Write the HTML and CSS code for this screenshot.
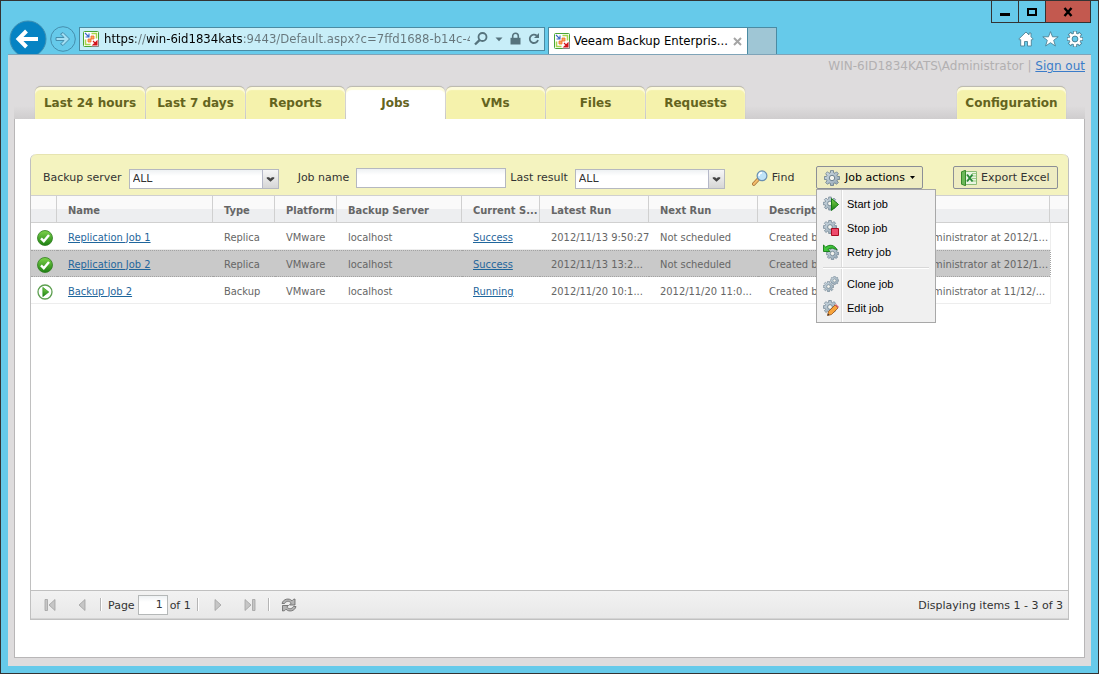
FILE: index.html
```html
<!DOCTYPE html>
<html lang="en">
<head>
    <meta charset="UTF-8">
    <meta name="viewport" content="width=device-width, initial-scale=1.0">
    <title>Veeam Backup Enterprise Manager</title>
    <link rel="stylesheet" href="styles.css">
</head>
<body>
    <!-- shared icon shapes -->
    <svg class="defs" width="0" height="0" aria-hidden="true">
        <defs>
            <linearGradient id="green" x1="0" y1="0" x2="0" y2="1">
                <stop offset="0" stop-color="#7ed34b"/>
                <stop offset="1" stop-color="#1c7f12"/>
            </linearGradient>
            <linearGradient id="steel" x1="0" y1="0" x2="1" y2="1">
                <stop offset="0" stop-color="#d3dee6"/>
                <stop offset="1" stop-color="#8fa3b1"/>
            </linearGradient>
            <symbol id="gear" viewBox="0 0 16 16">
                <path d="M6.500.6h3v2l1.500.7 1.500-1.500 1.900 1.900L13 5.200l.6 1.300h2v3h-2L13 10.900l1.400 1.500-1.900 1.900-1.500-1.400-1.500.6v2h-3v-2L5 12.900l-1.500 1.400-1.900-1.900L3 10.900l-.6-1.400h-2v-3h2L3 5.200 1.600 3.700l1.900-1.900L5 3.300l1.500-.7z" fill="url(#steel)" stroke="#647a8a" stroke-width=".8"/>
                <circle cx="8" cy="8" r="2.700" fill="#f4f4ee" stroke="#647a8a" stroke-width=".9"/>
            </symbol>
            <symbol id="site" viewBox="0 0 16 16">
                <rect x=".5" y=".5" width="15" height="15" rx="1" fill="#fff" stroke="#49a535"/>
                <path d="M8.500 2.500h5v5M2.500 8.500v5h5" fill="none" stroke="#a6d64a" stroke-width="1.500"/>
                <path d="M8.500 15.500h7v-7" fill="none" stroke="#888"/>
                <path d="M8 5h3v3H8zM5 8h3v3H5z" fill="#fba45c" stroke="#f0702a" stroke-width=".8"/>
                <path d="M2 2l3.500 3.500M6 2.500V6H2.500" fill="none" stroke="#3b68c8" stroke-width="1.100"/>
                <path d="M10 10l3 3M14 10v4h-4z" fill="#d2141c" stroke="#d2141c" stroke-width="1.100"/>
            </symbol>
            <symbol id="ok" viewBox="0 0 16 16">
                <circle cx="8" cy="8" r="7.500" fill="url(#green)" stroke="#2f7c20" stroke-width=".8"/>
                <path d="M4 8.300l2.800 2.900L12 4.900" fill="none" stroke="#fff" stroke-width="2.400"/>
            </symbol>
            <symbol id="run" viewBox="0 0 16 16">
                <circle cx="8" cy="8" r="7" fill="#fff" stroke="#5d9f50" stroke-width="1.300"/>
                <path d="M5.800 3.300v9.400L11.800 8z" fill="url(#green)" stroke="#1c8a12" stroke-width=".6"/>
            </symbol>
            <symbol id="chevron" viewBox="0 0 16 16">
                <path d="M4 6h2.500L8 7.500 9.500 6H12v1.500L8 11 4 7.500z" fill="#444"/>
            </symbol>
        </defs>
    </svg>

    <div class="window">
        <header class="browser-bar">
            <button class="back" aria-label="Back">
                <svg width="38" height="38" viewBox="0 0 38 38">
                    <circle cx="19" cy="19" r="18" fill="#0683c3" stroke="#3f8fb2"/>
                    <path d="M9.500 19H29M17.500 11l-8 8 8 8" fill="none" stroke="#fff" stroke-width="4"/>
                </svg>
            </button>
            <button class="forward" aria-label="Forward">
                <svg width="26" height="26" viewBox="0 0 26 26">
                    <circle cx="13" cy="13" r="12.300" fill="none" stroke="#458ead"/>
                    <path d="M6 11.500h8L10.500 8l2.500-1.500 6.500 6.500-6.500 6.500-2.500-1.500 3.500-3.500H6z" fill="#a3dff3" stroke="#458ead"/>
                </svg>
            </button>
            <form class="address">
                <svg width="16" height="16" aria-hidden="true"><use href="#site"/></svg>
                <input type="text" aria-label="Address" value="https://win-6id1834kats:9443/Default.aspx?c=7ffd1688-b14c-46f2-9d31">
                <button type="button" aria-label="Search">
                    <svg width="14" height="16" viewBox="0 0 14 16">
                        <circle cx="8.500" cy="6" r="4" fill="none" stroke="#56737d" stroke-width="1.800"/>
                        <path d="M5.500 9.200L1 13.500" stroke="#56737d" stroke-width="2.400"/>
                    </svg>
                </button>
                <button type="button" aria-label="Show address list">
                    <svg width="8" height="16" viewBox="0 0 8 16"><path d="M.5 6.500h7L4 10.300z" fill="#56737d"/></svg>
                </button>
                <button type="button" aria-label="Security report">
                    <svg width="11" height="16" viewBox="0 0 11 16">
                        <path d="M2.700 7V5a2.800 2.800 0 0 1 5.600 0v2" fill="none" stroke="#56737d" stroke-width="1.600"/>
                        <path d="M.5 6.800h10v6.700H.5z" fill="#56737d"/>
                    </svg>
                </button>
                <button type="button" aria-label="Refresh">
                    <svg width="12" height="16" viewBox="0 0 12 16">
                        <path d="M8.800 4.700A4.200 4.200 0 1 0 10 9" fill="none" stroke="#56737d" stroke-width="1.800"/>
                        <path d="M11 2v5H6z" fill="#56737d"/>
                    </svg>
                </button>
            </form>
            <div class="browser-tab">
                <svg width="16" height="16" aria-hidden="true"><use href="#site"/></svg>
                <span>Veeam Backup Enterpris...</span>
                <button aria-label="Close tab">
                    <svg width="9" height="9" viewBox="0 0 9 9"><path d="M1 1l7 7M8 1L1 8" stroke="#a5a5a5" stroke-width="2"/></svg>
                </button>
            </div>
            <button class="new-tab" aria-label="New tab"></button>
            <div class="window-tools">
                <div class="caption">
                    <button aria-label="Minimize"><svg width="10" height="10" viewBox="0 0 10 10"><path d="M0 6h10v3H0z"/></svg></button>
                    <button aria-label="Maximize"><svg width="10" height="10" viewBox="0 0 10 10"><path d="M1 2h8v6H1z" fill="none" stroke="#000" stroke-width="2"/></svg></button>
                    <button class="close" aria-label="Close"><svg width="10" height="10" viewBox="0 0 10 10"><path d="M1.500 1l7 8M8.500 1l-7 8" stroke="#000" stroke-width="2.400"/></svg></button>
                </div>
                <div class="shortcuts">
                    <button aria-label="Home">
                        <svg width="16" height="16" viewBox="0 0 16 16"><path d="M8 1L.8 8l1.200 1.200.7-.6V15h3.800v-4.500h3V15h3.800V8.600l.7.600L15.200 8 13 5.800V2h-2v1.900z" fill="#fff" stroke="#4b8296" stroke-width=".9"/></svg>
                    </button>
                    <button aria-label="Favorites">
                        <svg width="17" height="16" viewBox="0 0 17 16"><path d="M8.500.6l2 5.200h5.700l-4.500 3.500 1.700 5.700-4.900-3.300L3.600 15l1.700-5.700L.8 5.800h5.700z" fill="#fff" stroke="#4b8296" stroke-width=".9"/></svg>
                    </button>
                    <button aria-label="Tools">
                        <svg width="16" height="16" viewBox="0 0 16 16">
                            <g stroke="#4b8296" stroke-width="4.200"><path d="M8 0v16M0 8h16M2.300 2.300l11.400 11.400M13.700 2.300L2.300 13.700"/></g>
                            <circle cx="8" cy="8" r="5.800" fill="#fff" stroke="#4b8296" stroke-width=".8"/>
                            <g stroke="#fff" stroke-width="2.400"><path d="M8 .6v14.800M.6 8h14.800M2.800 2.800l10.400 10.400M13.200 2.800L2.800 13.200"/></g>
                            <circle cx="8" cy="8" r="2.900" fill="#66caea" stroke="#4b8296"/>
                        </svg>
                    </button>
                </div>
            </div>
        </header>

        <main class="page">
            <div class="user-bar">WIN-6ID1834KATS\Administrator | <a href="#">Sign out</a></div>

            <nav class="tabs">
                <a class="tab wide" href="#">Last 24 hours</a>
                <a class="tab" href="#">Last 7 days</a>
                <a class="tab" href="#">Reports</a>
                <a class="tab active" href="#">Jobs</a>
                <a class="tab" href="#">VMs</a>
                <a class="tab" href="#">Files</a>
                <a class="tab" href="#">Requests</a>
                <a class="tab config" href="#">Configuration</a>
            </nav>

            <section class="panel">
                <div class="grid">
                    <div class="toolbar">
                        <label for="server">Backup server</label>
                        <span class="combo">
                            <select id="server"><option>ALL</option></select>
                            <svg width="16" height="18" aria-hidden="true"><use href="#chevron"/></svg>
                        </span>
                        <label class="job-label" for="job-name">Job name</label>
                        <input type="text" id="job-name">
                        <label for="result">Last result</label>
                        <span class="combo">
                            <select id="result"><option>ALL</option></select>
                            <svg width="16" height="18" aria-hidden="true"><use href="#chevron"/></svg>
                        </span>
                        <button class="find">
                            <svg width="16" height="16" viewBox="0 0 16 16">
                                <path d="M6 9.500L1.800 14" stroke="#a9753a" stroke-width="3.600" stroke-linecap="round"/>
                                <path d="M6 9.500L1.800 14" stroke="#f3bd6c" stroke-width="2" stroke-linecap="round"/>
                                <circle cx="10" cy="5.800" r="4.900" fill="#bfe3f8" stroke="#6a8fb0" stroke-width="1.200"/>
                                <path d="M7 6a3.200 3.200 0 0 1 3-3.200" fill="none" stroke="#fff" stroke-width="1.400"/>
                            </svg>
                            Find
                        </button>
                        <div class="actions">
                            <button class="boxed job-actions">
                                <svg width="16" height="16"><use href="#gear"/></svg>
                                Job actions
                                <svg width="5" height="4" viewBox="0 0 5 4"><path d="M0 0h5L2.500 3z"/></svg>
                            </button>
                            <div class="menu">
                                <button>
                                    <svg width="16" height="16" viewBox="0 0 16 16"><use href="#gear" width="14" height="15"/><path d="M8.500 2.500v12L15.500 8.500z" fill="url(#green)" stroke="#147c14"/></svg>
                                    Start job
                                </button>
                                <button>
                                    <svg width="16" height="16" viewBox="0 0 16 16"><use href="#gear" width="14" height="14"/><path d="M8.500 8.500h7v7h-7z" fill="#ee4a6c" stroke="#a80c20"/></svg>
                                    Stop job
                                </button>
                                <button>
                                    <svg width="16" height="16" viewBox="0 0 16 16"><use href="#gear" x="3" y="3" width="13" height="13"/><path d="M.5 1v6.500h6.500L5 5.500C7.500 3.600 10.500 3.600 14 6 12 .8 6 0 2.800 3.200z" fill="#3fc43a" stroke="#147c14" stroke-width=".9"/></svg>
                                    Retry job
                                </button>
                                <hr>
                                <button>
                                    <svg width="16" height="16" viewBox="0 0 16 16"><use href="#gear" x="7" width="9" height="9"/><use href="#gear" y="5" width="11" height="11"/></svg>
                                    Clone job
                                </button>
                                <button>
                                    <svg width="16" height="16" viewBox="0 0 16 16"><use href="#gear" width="14" height="14"/><path d="M4.500 15.500l1-4L12 5l3 3-6.500 6.500z" fill="#f7a43c" stroke="#96501a" stroke-width=".8"/><path d="M12 5l1-1 3 3-1 1z" fill="#d9606a"/><path d="M4.500 15.500l.5-2 1.500 1.500z" fill="#333"/></svg>
                                    Edit job
                                </button>
                            </div>
                        </div>
                        <button class="boxed export">
                            <svg width="16" height="16" viewBox="0 0 16 16">
                                <path d="M4.500 1.500h11v13h-11z" fill="#e9f5e2" stroke="#8cbc76"/>
                                <path d="M11 3.500h4M11 6h4M11 8.500h4M11 11h4" stroke="#9ccc84"/>
                                <path d="M.5 1.800L4.500.3v15.400L.5 14.200z" fill="#6cb858" stroke="#388a2b"/>
                                <path d="M6 4.500l5.500 7M11.500 4.500l-5.500 7" stroke="#2c8a38" stroke-width="2"/>
                            </svg>
                            Export Excel
                        </button>
                    </div>

                    <table class="jobs">
                        <colgroup>
                            <col class="c-icon"><col class="c-name"><col class="c-short"><col class="c-short"><col class="c-server"><col class="c-status"><col class="c-date"><col class="c-date"><col><col class="c-end">
                        </colgroup>
                        <thead>
                            <tr>
                                <th></th><th>Name</th><th>Type</th><th>Platform</th><th>Backup Server</th><th>Current S...</th><th>Latest Run</th><th>Next Run</th><th>Description</th><th></th>
                            </tr>
                        </thead>
                        <tbody>
                            <tr>
                                <td><svg width="16" height="16"><use href="#ok"/></svg></td>
                                <td><a href="#">Replication Job 1</a></td>
                                <td>Replica</td>
                                <td>VMware</td>
                                <td>localhost</td>
                                <td><a href="#">Success</a></td>
                                <td>2012/11/13 9:50:27</td>
                                <td>Not scheduled</td>
                                <td>Created by WIN-6ID1834KATS\Administrator at 2012/1...</td>
                                <td></td>
                            </tr>
                            <tr class="selected">
                                <td><svg width="16" height="16"><use href="#ok"/></svg></td>
                                <td><a href="#">Replication Job 2</a></td>
                                <td>Replica</td>
                                <td>VMware</td>
                                <td>localhost</td>
                                <td><a href="#">Success</a></td>
                                <td>2012/11/13 13:2...</td>
                                <td>Not scheduled</td>
                                <td>Created by WIN-6ID1834KATS\Administrator at 2012/1...</td>
                                <td></td>
                            </tr>
                            <tr>
                                <td><svg width="16" height="16"><use href="#run"/></svg></td>
                                <td><a href="#">Backup Job 2</a></td>
                                <td>Backup</td>
                                <td>VMware</td>
                                <td>localhost</td>
                                <td><a href="#">Running</a></td>
                                <td>2012/11/20 10:1...</td>
                                <td>2012/11/20 11:0...</td>
                                <td>Created by WIN-6ID1834KATS\Administrator at 11/12/...</td>
                                <td></td>
                            </tr>
                        </tbody>
                    </table>

                    <footer class="pager">
                        <button aria-label="First page"><svg width="12" height="12" viewBox="0 0 12 12"><path d="M1 .5h2.500v11H1zM11 .5v11L5 6z" fill="#c6c6c6" stroke="#a2a2a2" stroke-width=".8"/></svg></button>
                        <button aria-label="Previous page"><svg width="12" height="12" viewBox="0 0 12 12"><path d="M9 .5v11L3 6z" fill="#c6c6c6" stroke="#a2a2a2" stroke-width=".8"/></svg></button>
                        <span class="divider"></span>
                        <label for="page-no">Page</label>
                        <input type="text" id="page-no" value="1">
                        <span>of 1</span>
                        <span class="divider"></span>
                        <button aria-label="Next page"><svg width="12" height="12" viewBox="0 0 12 12"><path d="M3 .5v11L9 6z" fill="#c6c6c6" stroke="#a2a2a2" stroke-width=".8"/></svg></button>
                        <button aria-label="Last page"><svg width="12" height="12" viewBox="0 0 12 12"><path d="M8.500 .5H11v11H8.500zM1 .5v11L7 6z" fill="#c6c6c6" stroke="#a2a2a2" stroke-width=".8"/></svg></button>
                        <span class="divider"></span>
                        <button class="reload" aria-label="Refresh">
                            <svg width="16" height="16" viewBox="0 0 16 16">
                                <path d="M1 6.500C2 2 8 .5 11 3.800l1.500-1.500 1.500-.3V8H8.500l1.700-2C8 3.500 5 4 3.500 6.500zM15 9.500c-1 4.500-7 6-10 2.700L3.500 13.700 1.500 14V8.500h6L5.800 10C8 12.500 11 12 12.500 9.500z" fill="#b4b4b4" stroke="#666" stroke-width=".8"/>
                            </svg>
                        </button>
                        <span class="summary">Displaying items 1 - 3 of 3</span>
                    </footer>
                </div>
            </section>
        </main>
    </div>
</body>
</html>
```

FILE: styles.css
```css
:root {
    --sky: #66caea;
    --frame: #333;
    --page: #dedcdd;
    --yellow: #f5f2ac;
    --olive: #64641e;
    --line: #c0c0c0;
    --text: #333;
    --wide: "DejaVu Sans", Verdana, sans-serif;
    --narrow: "DejaVu Sans Condensed", Tahoma, sans-serif;
}

* {
    box-sizing: border-box;
}

body {
    margin: 0;
    font: 11px/16px var(--wide);
    color: var(--text);
}

button,
input,
select {
    font: inherit;
    color: inherit;
}

button {
    padding: 0;
    border: 0;
    background: none;
}

svg {
    display: block;
    flex: none;
}

.defs {
    position: absolute;
}

.window {
    display: flex;
    flex-direction: column;
    min-height: 100vh;
    padding: 0 7px 7px;
    border: 1px solid var(--frame);
    background: var(--sky);
}

/* browser bar */
.browser-bar {
    display: flex;
    align-items: flex-end;
    height: 53px;
    overflow: hidden;
}

.back {
    height: 34px;
    margin-left: 1px;
}

.forward {
    margin: 0 3px 2px;
}

.address {
    display: flex;
    flex: 0 0 43%;
    align-items: center;
    gap: 7px;
    height: 24px;
    margin: 0 3px 3px 0;
    padding: 0 4px 0 3px;
    border: 1px solid #4a8ba3;
    background: #c8eef8;
}

/* host name stands out from the rest of the url */
.address input {
    flex: 1;
    min-width: 0;
    margin-right: -3px;
    margin-left: -2px;
    padding: 0;
    border: 0;
    outline: 0;
    font: 13px/20px var(--narrow);
    background: linear-gradient(90deg, #000 32px, #66757a 32px 43px, #000 43px 139px, #66757a 139px);
    background-clip: text;
    -webkit-text-fill-color: transparent;
}

.browser-tab {
    display: flex;
    flex: 0 0 200px;
    align-items: center;
    gap: 4px;
    height: 27px;
    padding: 0 5px;
    border: 1px solid #4a8ba3;
    border-bottom: 0;
    background: #fff;
    font: 13px/20px var(--narrow);
    color: #000;
}

.browser-tab span {
    flex: 1;
    white-space: nowrap;
}

.new-tab {
    width: 29px;
    height: 27px;
    border: solid #4a8ba3;
    border-width: 1px 1px 0 0;
    background: #9fc6d5;
}

.window-tools {
    align-self: stretch;
    margin-left: auto;
}

.caption {
    display: flex;
    border: 1px solid var(--frame);
    border-top: 0;
}

.caption button {
    display: grid;
    place-items: center;
    width: 27px;
    height: 21px;
    border-right: 1px solid var(--frame);
}

.caption .close {
    width: 44px;
    border-right: 0;
    background: #c3594f;
}

.shortcuts {
    display: flex;
    justify-content: flex-end;
    gap: 8px;
    padding: 8px;
}

/* web page */
.page {
    display: flex;
    flex: 1;
    flex-direction: column;
    padding: 0 6px 8px;
    border-top: 1px solid #7fa4b8;
    background: var(--page);
}

.user-bar {
    padding: 3px 0 12px;
    text-align: right;
    font-size: 12px;
    color: #b2b0b1;
}

.user-bar a {
    color: #3b7cc9;
}

.tabs {
    display: flex;
    gap: 1px;
    padding: 0 19px 0 21px;
    background: linear-gradient(transparent 60%, #cfcdce);
}

.tab {
    flex: 0 0 99px;
    height: 33px;
    border-top: 1px solid #bdbbb0;
    border-radius: 6px 6px 0 0;
    box-shadow: 0 0 1px #aaa, inset 0 3px 1px #fdfbdc;
    background: var(--yellow);
    text-align: center;
    text-decoration: none;
    font: bold 12px/32px var(--wide);
    color: var(--olive);
}

.tab.wide {
    flex-basis: 110px;
}

.tab.active {
    background: #fff;
}

.tab.config {
    flex-basis: 109px;
    margin-left: auto;
}

.panel {
    display: flex;
    flex: 1;
    flex-direction: column;
    padding: 35px 15px 37px;
    border: 1px solid #b8b6b7;
    border-top: 0;
    background: #fff;
}

.grid {
    display: flex;
    flex: 1;
    flex-direction: column;
    border: 1px solid var(--line);
    border-top: 0;
    border-radius: 6px 6px 0 0;
}

/* filters */
.toolbar {
    display: flex;
    align-items: center;
    height: 42px;
    padding: 5px 10px 0 12px;
    border-top: 1px solid #e6e4b0;
    border-bottom: 1px solid #d0d0d0;
    border-radius: 6px 6px 0 0;
    background: #f4f3bf;
    white-space: nowrap;
}

.toolbar label {
    margin-right: 7px;
}

.toolbar .job-label {
    margin-left: 19px;
}

.combo {
    position: relative;
    flex: 0 1 150px;
    margin-top: 2px;
}

.combo svg {
    position: absolute;
    top: 1px;
    right: 1px;
    border-left: 1px solid #b5b8c8;
    background: linear-gradient(#f6f6f6, #d6d6d6);
    pointer-events: none;
}

.toolbar select,
.toolbar input {
    height: 20px;
    padding: 0 3px;
    border: 1px solid #b5b8c0;
    border-radius: 0;
    background: linear-gradient(#eef1f3, #fff 6px);
}

.toolbar select {
    display: block;
    width: 100%;
    appearance: none;
}

.toolbar input {
    flex: 0 1 150px;
    min-width: 60px;
    margin-right: 4px;
}

.find {
    display: flex;
    gap: 4px;
    margin-left: 27px;
}

.actions {
    position: relative;
    margin-left: auto;
}

.boxed {
    display: flex;
    align-items: center;
    gap: 4px;
    min-width: 105px;
    height: 23px;
    padding: 0 5px 0 7px;
    border: 1px solid #8c8f96;
    border-radius: 2px;
    background: #eeecc2;
}

.job-actions {
    gap: 5px;
    min-width: 107px;
    color: #000;
}

.export {
    margin-left: 30px;
}

.menu {
    position: absolute;
    top: 23px;
    left: 0;
    z-index: 1;
    width: 120px;
    padding: 2px 0;
    border: 1px solid #a8a8a8;
    background: linear-gradient(90deg, #f0f0f0 24px, #dcdcdc 24px 25px, #fff 25px 26px, #f0f0f0 26px);
}

.menu button {
    display: flex;
    align-items: center;
    gap: 8px;
    width: 100%;
    height: 24px;
    padding-left: 6px;
    font: 11px/16px "Liberation Sans", Arial, sans-serif;
    color: #000;
}

.menu hr {
    height: 2px;
    margin: 3px 6px;
    border: 0;
    border-top: 1px solid #d8d8d8;
    background: #fff;
}

/* job list */
.jobs {
    width: 100%;
    table-layout: fixed;
    border-collapse: separate;
    border-spacing: 0;
    font-family: var(--narrow);
    color: #666;
}

.c-icon { width: 26px; }
.c-name { width: 156px; }
.c-short { width: 62px; }
.c-server { width: 125px; }
.c-status { width: 78px; }
.c-date { width: 109px; }
.c-end { width: 18px; }

.jobs th,
.jobs td {
    height: 27px;
    padding: 3px 0 0 11px;
    overflow: hidden;
    text-align: left;
    white-space: nowrap;
}

.jobs th {
    border-right: 1px solid #d0d0d0;
    border-bottom: 1px solid #d0d0d0;
    background: linear-gradient(#fafafa 50%, #edeef0 50%);
}

.jobs th:last-child {
    border-right: 0;
}

.jobs td {
    border-bottom: 1px solid #ededed;
}

.jobs td:first-child {
    padding-left: 6px;
}

.jobs td:last-child {
    border-bottom: 0;
    border-left: 1px solid #ededed;
    background: #fff;
}

.jobs a {
    color: #1f669c;
}

.jobs .selected td {
    padding-top: 2px;
    border-top: 1px dotted #a3a3a3;
    border-bottom: 1px dotted #a3a3a3;
    background: #c9c9c9;
}

.jobs .selected td:last-child {
    border-top-color: transparent;
    border-bottom-color: transparent;
    border-left: 1px dotted #a3a3a3;
    background: #fff;
}

/* paging */
.pager {
    display: flex;
    align-items: center;
    height: 29px;
    margin-top: auto;
    padding: 0 5px 0 3px;
    border-top: 1px solid var(--line);
    border-bottom: 1px solid #d4d4d4;
    background: linear-gradient(#f2f2f2, #e8e8e8);
}

.pager button {
    display: grid;
    place-items: center;
    width: 32px;
    height: 24px;
}

.pager .divider {
    width: 2px;
    height: 13px;
    margin: 0 3px 0 2px;
    border-left: 1px solid #b5b5b5;
    background: #fff;
}

.pager label {
    margin: 2px 3px 0;
}

.pager input {
    width: 30px;
    height: 20px;
    margin-right: 2px;
    padding: 0 4px;
    border: 1px solid #b5b8b8;
    background: linear-gradient(#eef1f3, #fff 6px);
    text-align: right;
}

.pager span {
    margin: 2px 4px 0 0;
}

.pager .summary {
    margin-right: 0;
    margin-left: auto;
}
```
